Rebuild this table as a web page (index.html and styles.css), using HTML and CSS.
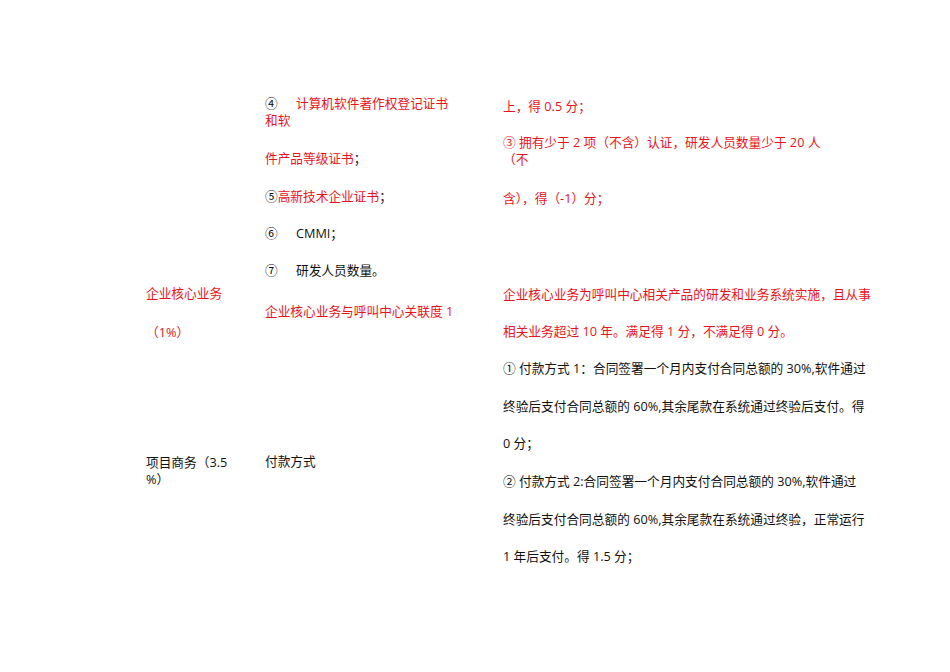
FILE: index.html
```html
<!DOCTYPE html>
<html lang="zh-CN">
<head>
<meta charset="utf-8">
<title>评分表</title>
<link rel="stylesheet" href="styles.css">
</head>
<body>
<div class="page">
  <div class="col c1">
    <p class="red m-c1a">企业核心业务</p>
    <p class="red m22">（1%）</p>
    <p class="m113">项目商务（3.5<br>%）</p>
  </div>
  <div class="col c2">
    <p class="m-c2a"><span class="num">④</span><span class="red">计算机软件著作权登记证书</span><br><span class="red">和软</span></p>
    <p class="m21"><span class="red">件产品等级证书</span>；</p>
    <p class="m21">⑤<span class="red">高新技术企业证书</span>；</p>
    <p class="m20"><span class="num">⑥</span>CMMI；</p>
    <p class="m20"><span class="num">⑦</span>研发人员数量。</p>
    <p class="red m24">企业核心业务与呼叫中心关联度 1</p>
    <p class="m133">付款方式</p>
  </div>
  <div class="col c3">
    <p class="red m-c3a">上，得 0.5 分；</p>
    <p class="red m19">③ 拥有少于 2 项（不含）认证，研发人员数量少于 20 人<br>（不</p>
    <p class="red m22">含），得（-1）分；</p>
    <p class="red m79">企业核心业务为呼叫中心相关产品的研发和业务系统实施，且从事</p>
    <p class="red m20">相关业务超过 10 年。满足得 1 分，不满足得 0 分。</p>
    <p class="m20">① 付款方式 1：合同签署一个月内支付合同总额的 30%,软件通过</p>
    <p class="m21">终验后支付合同总额的 60%,其余尾款在系统通过终验后支付。得</p>
    <p class="m20">0 分；</p>
    <p class="m21">② 付款方式 2:合同签署一个月内支付合同总额的 30%,软件通过</p>
    <p class="m21">终验后支付合同总额的 60%,其余尾款在系统通过终验，正常运行</p>
    <p class="m20">1 年后支付。得 1.5 分；</p>
  </div>
</div>
</body>
</html>
```

FILE: styles.css
```css
html, body {
  margin: 0;
  padding: 0;
  background: #ffffff;
}

p {
  margin: 0;
  white-space: nowrap;
}

.page {
  width: 950px;
  height: 672px;
  display: flex;
  padding-left: 146px;
  box-sizing: border-box;
  font-family: "Open Sans", "Noto Sans CJK SC", sans-serif;
  font-size: 12.7px;
  line-height: 17px;
  color: #111111;
}

.c1 { width: 119px; }
.c2 { width: 238px; }
.c3 { flex: 1; }

.red { color: #e8141b; }

.num {
  display: inline-block;
  width: 31px;
}

.m-c1a { margin-top: 285px; }
.m-c2a { margin-top: 95px; }
.m-c3a { margin-top: 98px; }
.m19 { margin-top: 19px; }
.m20 { margin-top: 20px; }
.m21 { margin-top: 21px; }
.m22 { margin-top: 22px; }
.m24 { margin-top: 24px; }
.m79 { margin-top: 79px; }
.m113 { margin-top: 113px; }
.m133 { margin-top: 133px; }
```
